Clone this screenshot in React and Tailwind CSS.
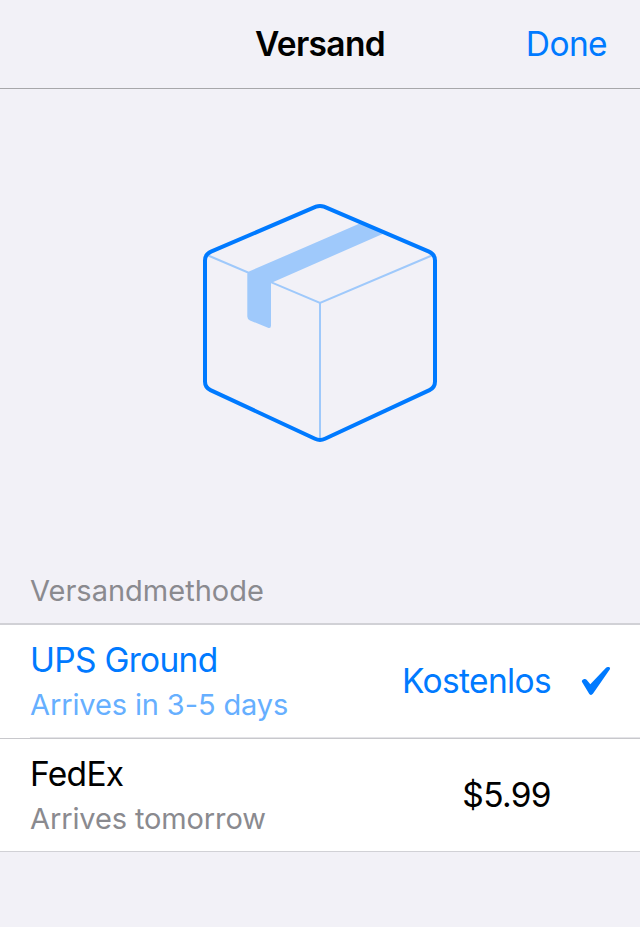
const METHODS = [
  {
    name: "UPS Ground",
    nameSpacing: "tracking-[-0.7px]",
    detail: "Arrives in 3-5 days",
    detailSpacing: "tracking-[-0.12px]",
    price: "Kostenlos",
    priceSpacing: "tracking-[-0.65px]",
    selected: true,
  },
  {
    name: "FedEx",
    nameSpacing: "tracking-[-0.7px]",
    detail: "Arrives tomorrow",
    detailSpacing: "tracking-[-0.12px]",
    price: "$5.99",
    priceSpacing: "tracking-[-0.65px]",
    selected: false,
  },
];

function PackageIcon() {
  return (
    <svg width="240" height="244" viewBox="200 200 240 244" fill="none">
      <path
        d="M207 255L320 303L433 255M320 303V439"
        stroke="#9fc9fb"
        strokeWidth="2"
      />
      <path
        d="M249.500 271.300L362 222.500L386 232.500L271 282.900V325.500Q271 328.800 268 327.800L250 320.500Q247.300 319.300 247.300 316.500V274Q247.300 272.200 249.500 271.300Z"
        fill="#9fc9fb"
      />
      <path
        d="M316 206.700Q320 205.100 324 206.700L429 251.600Q435 254.400 435 260.400V381.500Q435 387.500 429.500 390.100L325 438.800Q320 441.200 315 438.800L210.500 390.100Q205 387.500 205 381.500V260.400Q205 254.400 211 251.600Z"
        stroke="#007aff"
        strokeWidth="4"
        strokeLinejoin="round"
      />
    </svg>
  );
}

function CheckIcon() {
  return (
    <svg width="30" height="30" viewBox="581 666 30 30" fill="#007aff">
      <path d="M581.900 681.800Q581.500 680.600 582.700 679.800L584.200 679.100Q585.800 678.700 586.800 680L590.300 684.200L605.800 667.900Q606.700 667 607.900 667H608.800Q610.800 667.300 609.900 669.200L592.900 693.800Q591.200 695.900 589.300 694Z" />
    </svg>
  );
}

function MethodRow({ method, last }) {
  const { selected } = method;
  return (
    <li
      className={`flex bg-white ${last ? "h-[113px] border-b border-[#d1d1d6]" : "h-[114px] flex-col"}`}
    >
      <div className="flex w-full grow items-center pl-[30px]">
        <div className="flex grow flex-col pt-[3px]">
          <span
            className={`text-[33.5px] leading-[44px] ${method.nameSpacing} ${selected ? "text-[#007aff]" : "text-black"}`}
          >
            {method.name}
          </span>
          <span
            className={`text-[29px] leading-[45px] ${method.detailSpacing} ${selected ? "text-[#66afff]" : "text-[#8a8a8f]"}`}
          >
            {method.detail}
          </span>
        </div>
        <span
          className={`text-[33.5px] leading-[44px] ${method.priceSpacing} ${selected ? "text-[#007aff]" : "text-black"}`}
        >
          {method.price}
        </span>
        <div className="flex w-[89px] shrink-0 justify-end pr-[29px]">
          {selected && <CheckIcon />}
        </div>
      </div>
      {!last && (
        <div className="shrink-0">
          <div className="ml-[30px] h-px bg-[#e4e4e8]" />
          <div className="h-px bg-[#c8c8cc]" />
        </div>
      )}
    </li>
  );
}

export default function App() {
  return (
    <div className="flex h-[927px] w-[640px] flex-col overflow-hidden bg-[#f2f1f7] font-['Inter','Liberation_Sans',sans-serif]">
      <header className="grid h-[89px] shrink-0 grid-cols-[1fr_auto_1fr] items-center border-b border-[#a7a7aa]">
        <h1 className="col-start-2 text-[33.5px] leading-[44px] font-semibold tracking-[-0.65px] text-black">
          Versand
        </h1>
        <button className="justify-self-end pr-[33px] text-[33.5px] leading-[44px] tracking-[-0.6px] text-[#007aff]">
          Done
        </button>
      </header>
      <div className="flex h-[468px] shrink-0 justify-center pt-[111px]">
        <PackageIcon />
      </div>
      <h2 className="flex h-[68px] shrink-0 items-center border-b-2 border-[#d1d1d6] pt-[2px] pl-[30px] text-[29px] leading-[44px] tracking-[0px] text-[#8a8a8f]">
        Versandmethode
      </h2>
      <ul className="shrink-0">
        {METHODS.map((method, i) => (
          <MethodRow key={method.name} method={method} last={i === METHODS.length - 1} />
        ))}
      </ul>
    </div>
  );
}
